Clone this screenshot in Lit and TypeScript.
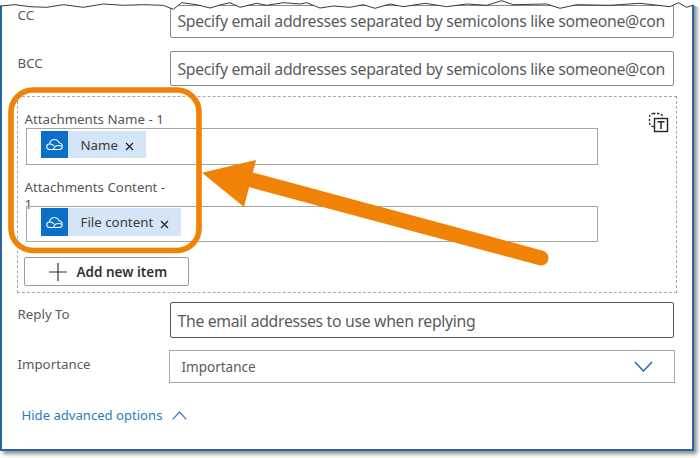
import { LitElement, html, css, svg } from "lit";
import { customElement } from "lit/decorators.js";

const EMAILS = "Specify email addresses separated by semicolons like someone@con";

const zoomed1 = [[0,18],[45,14],[90,20],[140,22],[190,14],[250,22],[310,12],[370,16],[430,14],[490,16],[520,28],[545,8],[590,14],[630,24],[660,15],[690,8],[720,22],[770,10],[800,16],[850,8],[900,12],[920,8],[960,24],[1000,18],[1050,22],
[1090,14],[1125,25],[1170,12],[1210,20],[1275,10],[1340,20],[1400,12],[1460,16],[1505,2],[1540,14],[1640,12],[1680,25],[1730,14],[1830,16],[1920,10],[2010,20],[2035,8],[2060,22],[2080,15]];
const edge = zoomed1.map(([x, y]) => `${(x / 3).toFixed(1)},${(y / 3).toFixed(1)}`).join(" ");

@customElement("app-root")
export class AppRoot extends LitElement {
  static styles = css`
    :host { display: block; width: 700px; height: 458px; background: #fff; position: relative; overflow: hidden;
      font-family: "Noto Sans", "Open Sans", sans-serif; color: #505050; }
    .frame { box-sizing: border-box; width: 694px; height: 451px; border: solid #2a64a8; border-width: 0 2.5px 2.5px 2.5px;
      box-shadow: 3px 3px 4px rgba(0,0,0,.45); padding: 5px 0 0 14.5px; background: #fff; }
    .row { display: grid; grid-template-columns: 153px 504px; align-items: start; }
    .row + .row { margin-top: 13px; }
    .label { font-size: 13.3px; line-height: 18px; color: #5a5a5a; }
    .row .label { margin-top: 3px; padding-left: 1px; }
    .row .label.top { margin-top: 1px; }
    .input { box-sizing: border-box; height: 35px; border: 1.5px solid #8a8a8a; border-radius: 2px; font-size: 15.8px;
      line-height: 34px; padding-left: 7px; white-space: nowrap; overflow: hidden; color: #5c5c5c; letter-spacing: -.32px; }
    .input.dark { border-color: #555; height: 36px; line-height: 36px; }
    .cc { height: 33px; line-height: 31px; }
    .box { width: 660px; box-sizing: border-box; height: 197px; margin: 10px 0 9px 0; border: 1px dashed #a8a8a8;
      padding: 13px 0 0 7px; position: relative; }
    .item { width: 573px; }
    .item .label { width: 150px; color: #555; }
    .item2 { margin-top: 14px; }
    .picker { box-sizing: border-box; height: 37px; border: 1px solid #a6a6a6; margin: 0 0 0 1px; padding: 2px 0 0 14px; display: flex; }
    .item2 .label { line-height: 17px; height: 27px; }
    .item2 .picker { margin-top: 0; height: 36px; padding-top: 1px; position: relative; }
    .chip { display: flex; align-items: center; height: 27px; background: #d3e5f6; color: #3a3a3a; font-size: 13.3px; padding-right: 12px; }
    .chip.tall { height: 28px; }
    .tile { width: 27px; align-self: stretch; background: #0a6fc9; display: flex; align-items: center; justify-content: center; margin-right: 13px; }
    .close { width: 9px; height: 9px; margin: 4px 0 0 7px; }
    .add { box-sizing: border-box; display: flex; align-items: center; width: 165px; height: 29px; margin: 15px 0 0 -1px;
      border: 1px solid #9a9a9a; border-radius: 2px; font-size: 13.5px; font-weight: 600; color: #333; padding-left: 24px; gap: 10px; }
    .copy { position: absolute; left: 630px; top: 15px; }
    .select { box-sizing: border-box; width: 506px; height: 33px; margin-left: -1px; border: 1px solid #a8a8a8; display: flex;
      align-items: center; justify-content: space-between; padding: 0 21px 0 12px; font-size: 13.5px; color: #5a5a5a; }
    .row.imp { margin-top: 12px; }
    .row.imp .label { margin-top: 5px; }
    .hide { display: flex; align-items: center; gap: 10px; margin: 22px 0 0 5px; font-size: 13.1px; color: #2b7cc4; line-height: 20px; }
    .overlay { position: absolute; left: 0; top: 0; pointer-events: none; }
  `;

  cloud() {
    return html`<svg width="17" height="13" viewBox="0 0 17 13" fill="none" stroke="#fff" stroke-width="1.1">
      <path d="M4 11.5C2 11.5 .8 10.2 .8 8.7 .8 7.2 2 6 3.5 6 4 3.4 6 1.5 8.5 1.5 10.6 1.5 12.3 2.8 13 4.7 14.9 5 16.2 6.5 16.2 8.2 16.2 10.1 14.8 11.5 13 11.5Z"/>
      <path d="M3.5 6C5.5 5.8 7 6.6 8 8M7.5 11.5C8 9.2 10 7.5 12.5 7.5 13.8 7.5 15 7.8 16 8.4"/>
    </svg>`;
  }

  chip(text: string, tall = false) {
    return html`<div class="chip ${tall ? "tall" : ""}">
      <span class="tile">${this.cloud()}</span><span>${text}</span>
      <svg class="close" viewBox="0 0 9 9" stroke="#222" stroke-width="1.2"><path d="M1 1L8 8M8 1L1 8"/></svg>
    </div>`;
  }

  render() {
    return html`
      <div class="frame">
        <div class="row">
          <div class="label top">CC</div>
          <div class="input cc">${EMAILS}</div>
        </div>
        <div class="row">
          <div class="label">BCC</div>
          <div class="input">${EMAILS}</div>
        </div>
        <div class="box">
          <svg class="copy" width="22" height="22" viewBox="0 0 22 22" fill="none" stroke="#222">
            <rect x="1.5" y="1.5" width="13" height="13" rx="3.5" stroke-width="1.3" stroke-dasharray="2.4 1.6"/>
            <rect x="6.5" y="6.5" width="13" height="13" stroke-width="1.4" fill="#fff"/>
            <path d="M9.5 9.7H16.5M13 9.7V17" stroke-width="1.5"/>
          </svg>
          <div class="item">
            <div class="label">Attachments Name - 1</div>
            <div class="picker">${this.chip("Name")}</div>
          </div>
          <div class="item item2">
            <div class="label">Attachments Content - 1</div>
            <div class="picker">${this.chip("File content", true)}</div>
          </div>
          <div class="add">
            <svg width="18" height="18" viewBox="0 0 18 18" stroke="#333" stroke-width="1.2"><path d="M9 0V18M0 9H18"/></svg>
            <span>Add new item</span>
          </div>
        </div>
        <div class="row">
          <div class="label">Reply To</div>
          <div class="input dark">The email addresses to use when replying</div>
        </div>
        <div class="row imp">
          <div class="label">Importance</div>
          <div class="select">
            <span>Importance</span>
            <svg width="19" height="11" viewBox="0 0 19 11" fill="none" stroke="#2a63b8" stroke-width="1.5"><path d="M1 1L9.5 10 18 1"/></svg>
          </div>
        </div>
        <div class="hide">
          <span>Hide advanced options</span>
          <svg width="15" height="9" viewBox="0 0 15 9" fill="none" stroke="#3f74c4" stroke-width="1.2"><path d="M.7 8.3L7.5 1 14.3 8.3"/></svg>
        </div>
      </div>
      <svg class="overlay" width="700" height="458" viewBox="0 0 700 458">
        ${svg`
          <polygon points="0,0 700,0 700,8 ${edge.split(" ").reverse().join(" ")}" fill="#fff"/>
          <polyline points="${edge}" fill="none" stroke="#222" stroke-width=".9"/>
          <rect x="11" y="90" width="188" height="160.5" rx="22" fill="none" stroke="#f08205" stroke-width="5.6"/>
          <path d="M248 179L541 258" stroke="#f08205" stroke-width="15" stroke-linecap="round"/>
          <polygon points="202,172.7 256,160 244,207" fill="#f08205"/>
        `}
      </svg>
    `;
  }
}
